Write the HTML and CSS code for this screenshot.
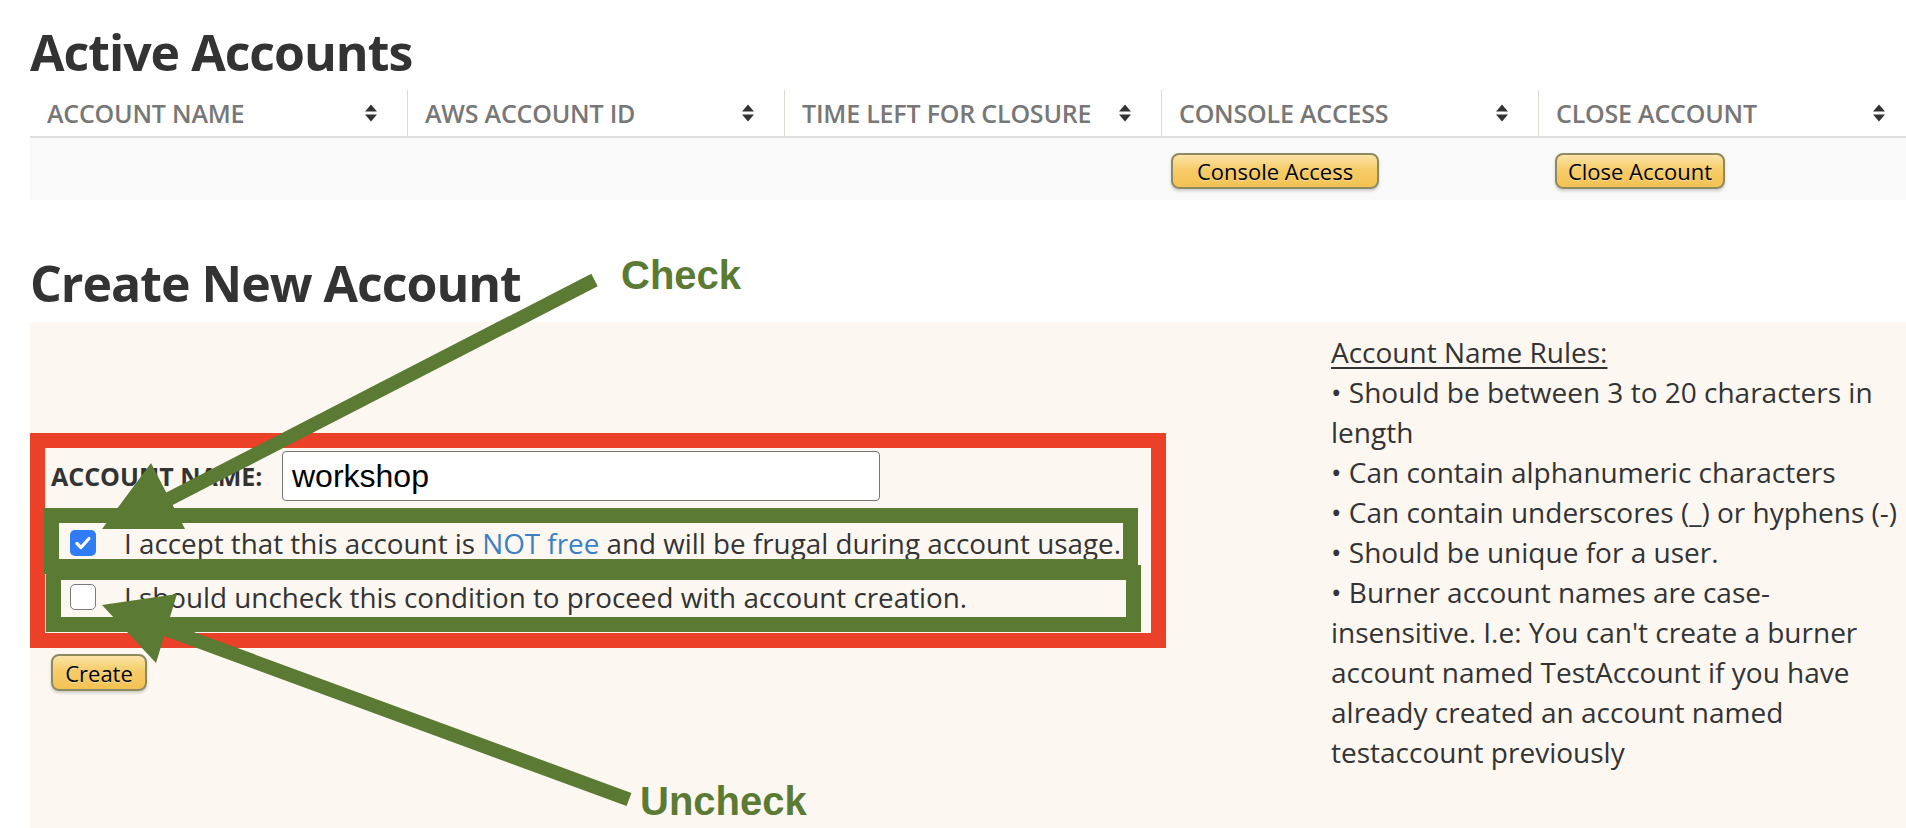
FILE: index.html
```html
<!DOCTYPE html>
<html lang="en">
<head>
<meta charset="utf-8">
<title>Accounts</title>
<link rel="stylesheet" href="styles.css">
</head>
<body>
<main class="page">
  <h1 class="title title-active">Active Accounts</h1>

  <div class="accounts" role="table">
    <div class="acc-head" role="row">
      <div class="hcell" role="columnheader"><span>ACCOUNT NAME</span><svg class="sort" viewBox="0 0 14 20"><path d="M7 1.5 L13 8.5 H1 Z M1 11.5 H13 L7 18.5 Z"/></svg></div>
      <div class="hcell" role="columnheader"><span>AWS ACCOUNT ID</span><svg class="sort" viewBox="0 0 14 20"><path d="M7 1.5 L13 8.5 H1 Z M1 11.5 H13 L7 18.5 Z"/></svg></div>
      <div class="hcell" role="columnheader"><span>TIME LEFT FOR CLOSURE</span><svg class="sort" viewBox="0 0 14 20"><path d="M7 1.5 L13 8.5 H1 Z M1 11.5 H13 L7 18.5 Z"/></svg></div>
      <div class="hcell" role="columnheader"><span>CONSOLE ACCESS</span><svg class="sort" viewBox="0 0 14 20"><path d="M7 1.5 L13 8.5 H1 Z M1 11.5 H13 L7 18.5 Z"/></svg></div>
      <div class="hcell" role="columnheader"><span>CLOSE ACCOUNT</span><svg class="sort" viewBox="0 0 14 20"><path d="M7 1.5 L13 8.5 H1 Z M1 11.5 H13 L7 18.5 Z"/></svg></div>
    </div>
    <div class="acc-row" role="row">
      <div class="cell" role="cell"></div>
      <div class="cell" role="cell"></div>
      <div class="cell" role="cell"></div>
      <div class="cell" role="cell"><button class="btn btn-console">Console Access</button></div>
      <div class="cell" role="cell"><button class="btn btn-close">Close Account</button></div>
    </div>
  </div>

  <h2 class="title title-create">Create New Account</h2>

  <section class="panel">
    <div class="form-col">
      <div class="name-row">
        <label class="name-label" for="acct">ACCOUNT NAME:</label>
        <input class="name-input" id="acct" type="text" value="workshop">
      </div>
      <div class="check-row check-row-first">
        <span class="cbox cbox-on"><svg viewBox="0 0 26 26"><path d="M7 13.5 L11 17.5 L19 8.5"/></svg></span>
        <span>I accept that this account is <a class="link" href="#">NOT free</a> and will be frugal during account usage.</span>
      </div>
      <div class="check-row check-row-second">
        <span class="cbox cbox-off"></span>
        <span>I should uncheck this condition to proceed with account creation.</span>
      </div>
      <button class="btn btn-create">Create</button>
    </div>
    <div class="rules">
      <p class="rules-title">Account Name Rules:</p>
      <p>• Should be between 3 to 20 characters in length</p>
      <p>• Can contain alphanumeric characters</p>
      <p>• Can contain underscores (_) or hyphens (-)</p>
      <p>• Should be unique for a user.</p>
      <p>• Burner account names are case-insensitive. I.e: You can't create a burner account named TestAccount if you have already created an account named testaccount previously</p>
    </div>
  </section>
</main>

<div class="annot">
  <svg class="annot-svg" width="1906" height="828" viewBox="0 0 1906 828">
    <rect x="37.5" y="440.5" width="1121" height="200" fill="none" stroke="#ea4128" stroke-width="15"/>
    <rect x="51.5" y="515.5" width="1079" height="51" fill="none" stroke="#5b7a34" stroke-width="15"/>
    <rect x="53.5" y="572.5" width="1080" height="52" fill="none" stroke="#5b7a34" stroke-width="15"/>
    <line x1="594.5" y1="280" x2="169" y2="499" stroke="#5b7a34" stroke-width="14"/>
    <polygon points="151,463 185,529 102,529" fill="#5b7a34"/>
    <line x1="629" y1="799.5" x2="164" y2="628.5" stroke="#5b7a34" stroke-width="14"/>
    <polygon points="102,605 177,594 156,663" fill="#5b7a34"/>
  </svg>
  <div class="note note-check">Check</div>
  <div class="note note-uncheck">Uncheck</div>
</div>
</body>
</html>
```

FILE: styles.css
```css
html, body {
  margin: 0;
  padding: 0;
  overflow: hidden;
  background: #fff;
}

body {
  position: relative;
  width: 1906px;
  height: 828px;
  font-family: "Open Sans", "Liberation Sans", sans-serif;
  color: #333;
}

.page {
  padding: 22px 0 0 30px;
}

.title {
  margin: 0;
  font-size: 50px;
  font-weight: 700;
  line-height: 60px;
  letter-spacing: -1px;
  color: #333;
}

/* table */
.accounts {
  margin-top: 8px;
  width: 1885px;
}

.acc-head {
  display: grid;
  grid-template-columns: repeat(5, 377px);
  height: 46px;
  border-bottom: 2px solid #dedede;
}

.hcell {
  display: flex;
  align-items: center;
  justify-content: space-between;
  padding: 0 29px 0 17px;
  border-left: 1px solid #dcdcd4;
  font-size: 25px;
  font-weight: 600;
  letter-spacing: -0.2px;
  color: #777;
  white-space: nowrap;
}

.hcell:first-child {
  border-left: none;
}

.sort {
  width: 14px;
  height: 20px;
  fill: #333;
  flex: none;
}

.acc-row {
  display: grid;
  grid-template-columns: repeat(5, 377px);
  height: 62px;
  background: #f9f9f9;
}

.cell {
  padding: 15px 0 0 10px;
}

.btn {
  display: inline-flex;
  align-items: center;
  justify-content: center;
  box-sizing: border-box;
  height: 36px;
  padding: 0;
  border: 2px solid #8e8a60;
  border-radius: 8px;
  background: linear-gradient(to bottom, #fbe4a8 0%, #f6cc68 45%, #f3c253 100%);
  box-shadow: 0 2px 3px rgba(0, 0, 0, 0.18);
  font-family: "Open Sans", sans-serif;
  font-size: 22px;
  color: #000;
  text-shadow: 0 1px 0 rgba(255, 255, 255, 0.45);
}

.btn-console {
  width: 208px;
}

.btn-close {
  width: 170px;
  margin-left: 7px;
}

.btn-create {
  width: 96px;
  height: 37px;
  margin-top: 37px;
}

/* create section */
.title-create {
  margin-top: 53px;
}

.panel {
  display: flex;
  margin-top: 9px;
  height: 506px;
  background: #fcf8f1;
}

.form-col {
  box-sizing: border-box;
  width: 1301px;
  padding: 129px 0 0 21px;
  flex: none;
}

.name-row {
  display: flex;
  align-items: center;
  height: 50px;
}

.name-label {
  width: 231px;
  flex: none;
  font-size: 25px;
  font-weight: 700;
  color: #333;
  white-space: nowrap;
}

.name-input {
  box-sizing: border-box;
  width: 598px;
  height: 50px;
  padding: 0 9px;
  border: 1.5px solid #767676;
  border-radius: 4px;
  background: #fff;
  font-family: "Liberation Sans", Arial, sans-serif;
  font-size: 32px;
  color: #000;
}

.check-row {
  display: flex;
  align-items: center;
  height: 40px;
  font-size: 27.8px;
  line-height: 40px;
  color: #333;
  white-space: nowrap;
}

.check-row-first {
  margin-top: 22px;
}

.check-row-second {
  margin-top: 14px;
}

.cbox {
  box-sizing: border-box;
  width: 26px;
  height: 26px;
  margin: 0 28px 0 19px;
  border-radius: 5px;
  flex: none;
}

.cbox svg {
  display: block;
  width: 26px;
  height: 26px;
}

.cbox svg path {
  fill: none;
  stroke: #fff;
  stroke-width: 3.2;
  stroke-linecap: round;
  stroke-linejoin: round;
}

.cbox-on {
  background: #2f7cf6;
}

.cbox-off {
  border: 1.5px solid #7a7a7a;
  background: #fff;
}

.link {
  color: #3b7fc4;
  text-decoration: none;
}

.rules {
  box-sizing: border-box;
  width: 572px;
  padding-top: 10px;
  font-size: 28px;
  line-height: 40px;
  color: #333;
  flex: none;
}

.rules p {
  margin: 0;
}

.rules-title {
  text-decoration: underline;
  text-underline-offset: 4px;
}

/* annotation overlay */
.annot {
  position: absolute;
  left: 0;
  top: 0;
  width: 1906px;
  height: 828px;
  pointer-events: none;
}

.annot-svg {
  display: block;
}

.note {
  position: absolute;
  font-family: "Liberation Sans", Arial, sans-serif;
  font-weight: 700;
  font-size: 40px;
  line-height: 40px;
  color: #5b7a34;
}

.note-check {
  left: 621px;
  top: 255px;
}

.note-uncheck {
  left: 640px;
  top: 781px;
}
```
